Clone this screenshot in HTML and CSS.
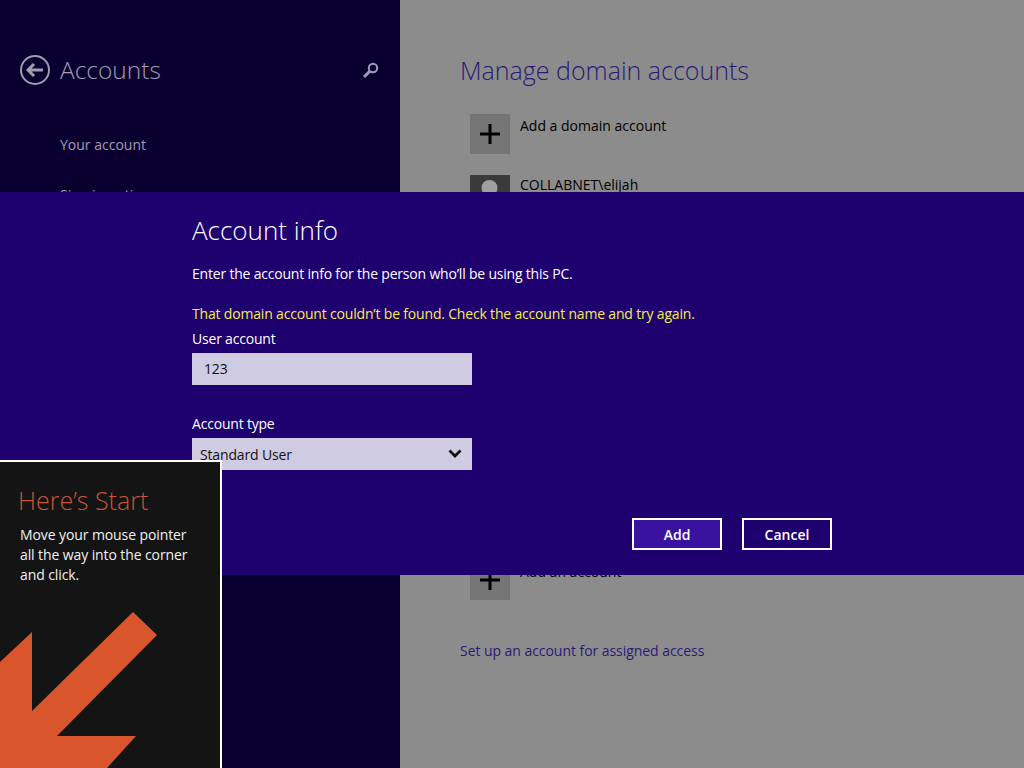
FILE: index.html
```html
<!DOCTYPE html>
<html>

	<head>
		<meta charset="UTF-8">
		<title>Accounts</title>
		<link rel="stylesheet" href="styles.css">
	</head>

	<body>
		<div class="screen">
			<div class="side">
				<div class="side-head">
					<svg class="back" width="32" height="32" viewBox="0 0 32 32">
						<circle cx="16" cy="16" r="14" fill="none" stroke="#a09cb4" stroke-width="2"/>
						<path d="M9 16h15M15 10l-6 6 6 6" fill="none" stroke="#a09cb4" stroke-width="3"/>
					</svg>
					<h1>Accounts</h1>
					<svg class="search" width="18" height="18" viewBox="0 0 18 18">
						<circle cx="11" cy="7" r="4.2" fill="none" stroke="#a09cb4" stroke-width="2"/>
						<path d="M8 10l-6 6" fill="none" stroke="#a09cb4" stroke-width="3"/>
					</svg>
				</div>
				<a class="side-link">Your account</a>
				<a class="side-link">Sign-in options</a>
			</div>

			<div class="main">
				<h2>Manage domain accounts</h2>
				<div class="row">
					<div class="tile">
						<svg width="20" height="20" viewBox="0 0 20 20"><path d="M10 0v20M0 10h20" stroke="#000" stroke-width="3"/></svg>
					</div>
					<span>Add a domain account</span>
				</div>
				<div class="row row-user">
					<div class="tile dark">
						<svg width="40" height="40" viewBox="0 0 40 40"><circle cx="19.500" cy="13" r="8" fill="#a0a0a0"/><path d="M7 40c1-12 6-19 12.500-19s11.500 7 12.500 19z" fill="#a0a0a0"/></svg>
					</div>
					<span>COLLABNET\elijah</span>
				</div>
				<div class="row row-other">
					<div class="tile">
						<svg width="20" height="20" viewBox="0 0 20 20"><path d="M10 0v20M0 10h20" stroke="#000" stroke-width="3"/></svg>
					</div>
					<span>Add an account</span>
				</div>
				<a class="assigned">Set up an account for assigned access</a>
			</div>
		</div>

		<div class="band">
			<h3>Account info</h3>
			<p class="intro">Enter the account info for the person who’ll be using this PC.</p>
			<p class="error">That domain account couldn’t be found. Check the account name and try again.</p>
			<label class="field-label">User account</label>
			<input class="field field-input" type="text" value="123" />
			<label class="field-label type-label">Account type</label>
			<div class="field select">
				<span>Standard User</span>
				<svg width="14" height="10" viewBox="0 0 14 10"><path d="M1.500 1.500L7 7l5.500-5.500" fill="none" stroke="#111" stroke-width="2.800"/></svg>
			</div>
			<div class="buttons">
				<input class="btn btn-add" type="button" value="Add" />
				<input class="btn" type="button" value="Cancel" />
			</div>
		</div>

		<div class="tip">
			<h4>Here’s Start</h4>
			<p>Move your mouse pointer all the way into the corner and click.</p>
			<svg class="arrow" width="220" height="306" viewBox="0 0 220 306">
				<path d="M133 150L157 173 57 274H136L107 306H0V200L32 170V249z" fill="#d9562c"/>
			</svg>
		</div>
	</body>

</html>
```

FILE: styles.css
```css
* {
	box-sizing: border-box;
}

html, body {
	margin: 0;
	padding: 0;
	height: 100%;
	overflow: hidden;
}

body {
	font-family: "Open Sans", "Noto Sans", sans-serif;
	font-size: 14px;
	position: relative;
	background-color: #8c8c8c;
}

h1, h2, h3, h4, p {
	margin: 0;
	font-weight: 300;
}

.screen {
	display: flex;
	height: 768px;
}

.side {
	width: 400px;
	background-color: #0a0030;
	padding: 54px 0 0 19px;
	color: #a09cb4;
}

.side-head {
	display: flex;
	align-items: center;
	height: 32px;
	margin-bottom: 49px;
}

.side-head h1 {
	font-size: 24.500px;
	margin-left: 9px;
	line-height: 32px;
	flex: 1;
}

.search {
	margin-right: 20px;
}

.side-link {
	display: block;
	margin-left: 41px;
	line-height: 20px;
	margin-bottom: 30px;
}

.main {
	flex: 1;
	padding: 53px 0 0 60px;
	color: #000;
}

.main h2 {
	font-size: 25px;
	line-height: 34px;
	color: #2a1a78;
	margin-bottom: 27px;
}

.row {
	display: flex;
	gap: 10px;
	height: 40px;
	margin-left: 10px;
	margin-bottom: 21px;
	line-height: 24px;
}

.row-user span {
	margin-top: -2px;
}

.row-other {
	margin-top: 345px;
}

.tile {
	width: 40px;
	height: 40px;
	background-color: #757575;
	display: flex;
	align-items: center;
	justify-content: center;
}

.dark {
	background-color: #3a3a3a;
}

.assigned {
	display: block;
	margin-top: 41px;
	color: #2a1a78;
	line-height: 20px;
	letter-spacing: -0.05px;
}

.band {
	position: absolute;
	left: 0;
	top: 192px;
	width: 100%;
	height: 383px;
	background-color: #1e006f;
	padding: 20px 0 0 192px;
	color: #fff;
	letter-spacing: -0.2px;
}

.band h3 {
	font-size: 26px;
	line-height: 36px;
	letter-spacing: 0;
}

.intro {
	margin-top: 16px;
	font-weight: 400;
	line-height: 20px;
}

.error {
	margin-top: 20px;
	color: #f4ee50;
	font-weight: 400;
	line-height: 20px;
	letter-spacing: -0.18px;
}

.field-label {
	display: block;
	margin-top: 5px;
	line-height: 20px;
}

.type-label {
	margin-top: 29px;
}

.field {
	display: flex;
	align-items: center;
	justify-content: space-between;
	width: 280px;
	height: 32px;
	margin-top: 4px;
	padding: 0 10px 0 8px;
	background-color: #cfcbe2;
	border: 0;
	outline: none;
	border-radius: 0;
	font-family: inherit;
	font-size: 14px;
	letter-spacing: -0.15px;
	color: #111;
}

.field-input {
	padding-left: 12px;
	padding-bottom: 2px;
}

.buttons {
	display: flex;
	gap: 20px;
	margin: 48px 0 0 440px;
}

.btn {
	width: 90px;
	height: 32px;
	background-color: #1e006f;
	border: 2px solid #fff;
	border-radius: 0;
	outline: none;
	color: #fff;
	font-family: inherit;
	font-size: 14px;
	font-weight: 600;
	padding: 0;
}

.btn-add {
	background-color: #3a12a0;
}

.tip {
	position: absolute;
	left: 0;
	top: 460px;
	width: 222px;
	height: 308px;
	background-color: #141414;
	border-top: 2px solid #fff;
	border-right: 2px solid #fff;
	padding: 22px 20px 0 20px;
	color: #f0f0f0;
	letter-spacing: -0.1px;
}

.tip h4 {
	font-size: 25px;
	line-height: 32px;
	color: #c8553a;
	margin-left: -2px;
	letter-spacing: 0;
}

.tip p {
	margin-top: 9px;
	font-weight: 400;
	line-height: 20px;
}

.arrow {
	position: absolute;
	left: 0;
	top: 0;
}
```
